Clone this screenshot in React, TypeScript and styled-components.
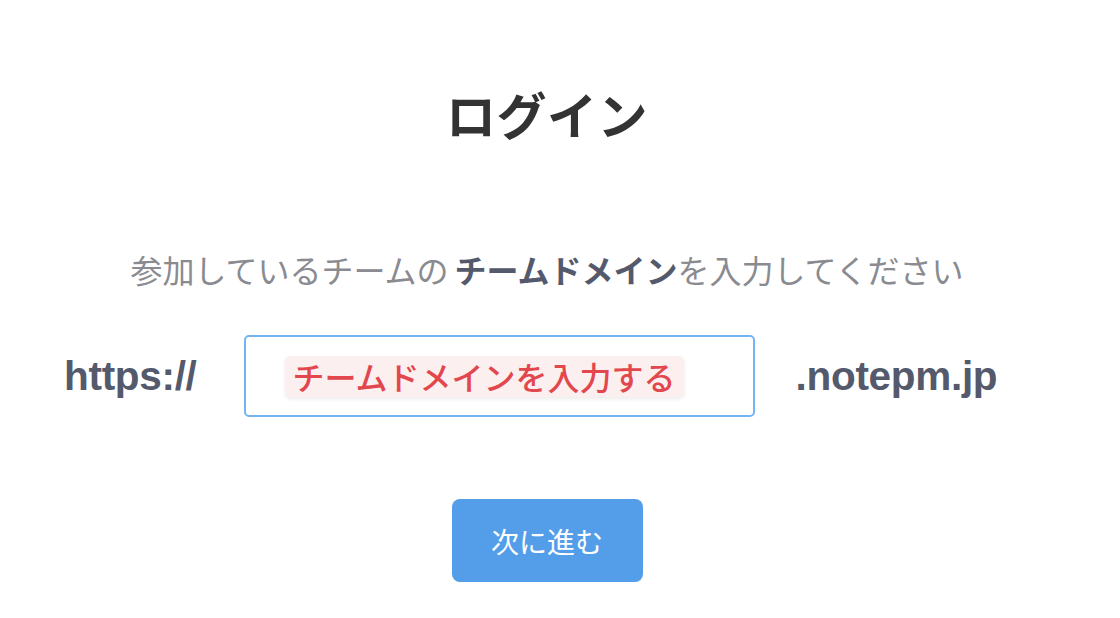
import React from 'react';
import styled, { createGlobalStyle } from 'styled-components';

const GlobalStyle = createGlobalStyle`
  html, body {
    margin: 0;
    padding: 0;
    background: #ffffff;
  }
  body {
    font-family: "Noto Sans CJK JP", "Noto Sans", sans-serif;
  }
`;

const Page = styled.div({
  width: '1094px',
  display: 'flex',
  flexDirection: 'column',
  alignItems: 'center',
  paddingTop: '88px',
});

const Title = styled.h1({
  margin: 0,
  fontSize: '50px',
  lineHeight: '50px',
  fontWeight: 700,
  color: '#333333',
  letterSpacing: '0.5px',
});

const Lead = styled.p({
  margin: '115px 0 0',
  fontSize: '32px',
  lineHeight: '32px',
  color: '#8a8b90',
  '& strong': {
    color: '#545a6b',
    fontWeight: 700,
    marginLeft: '6px',
  },
});

const DomainRow = styled.div({
  alignSelf: 'stretch',
  display: 'flex',
  alignItems: 'center',
  paddingLeft: '64px',
  marginTop: '50px',
});

const UrlPart = styled.span({
  fontFamily: '"Liberation Sans", Arial, sans-serif',
  fontWeight: 700,
  fontSize: '40.5px',
  color: '#545a6b',
  letterSpacing: '-0.3px',
});

const DomainInput = styled.div({
  boxSizing: 'border-box',
  flexShrink: 0,
  width: '511px',
  height: '82px',
  margin: '0 41px 0 47px',
  border: '2px solid #72b4f4',
  borderRadius: '5px',
  display: 'flex',
  alignItems: 'center',
  paddingLeft: '39px',
});

const Placeholder = styled.span({
  display: 'inline-block',
  padding: '0 8px',
  height: '41px',
  lineHeight: '41px',
  fontSize: '32px',
  fontWeight: 500,
  color: '#e2474d',
  background: '#fbeff0',
  borderRadius: '5px',
  boxShadow: '0 2px 4px rgba(0, 0, 0, 0.08)',
});

const NextButton = styled.button({
  marginTop: '82px',
  width: '191px',
  height: '83px',
  border: 'none',
  borderRadius: '8px',
  background: '#549ee9',
  color: '#ffffff',
  fontFamily: '"Noto Sans CJK JP", sans-serif',
  fontSize: '28px',
  cursor: 'pointer',
});

const App = () => (
  <>
    <GlobalStyle />
    <Page>
      <Title>ログイン</Title>
      <Lead>
        参加しているチームの
        <strong>チームドメイン</strong>
        を入力してください
      </Lead>
      <DomainRow>
        <UrlPart>https://</UrlPart>
        <DomainInput>
          <Placeholder>チームドメインを入力する</Placeholder>
        </DomainInput>
        <UrlPart>.notepm.jp</UrlPart>
      </DomainRow>
      <NextButton>次に進む</NextButton>
    </Page>
  </>
);

export default App;
